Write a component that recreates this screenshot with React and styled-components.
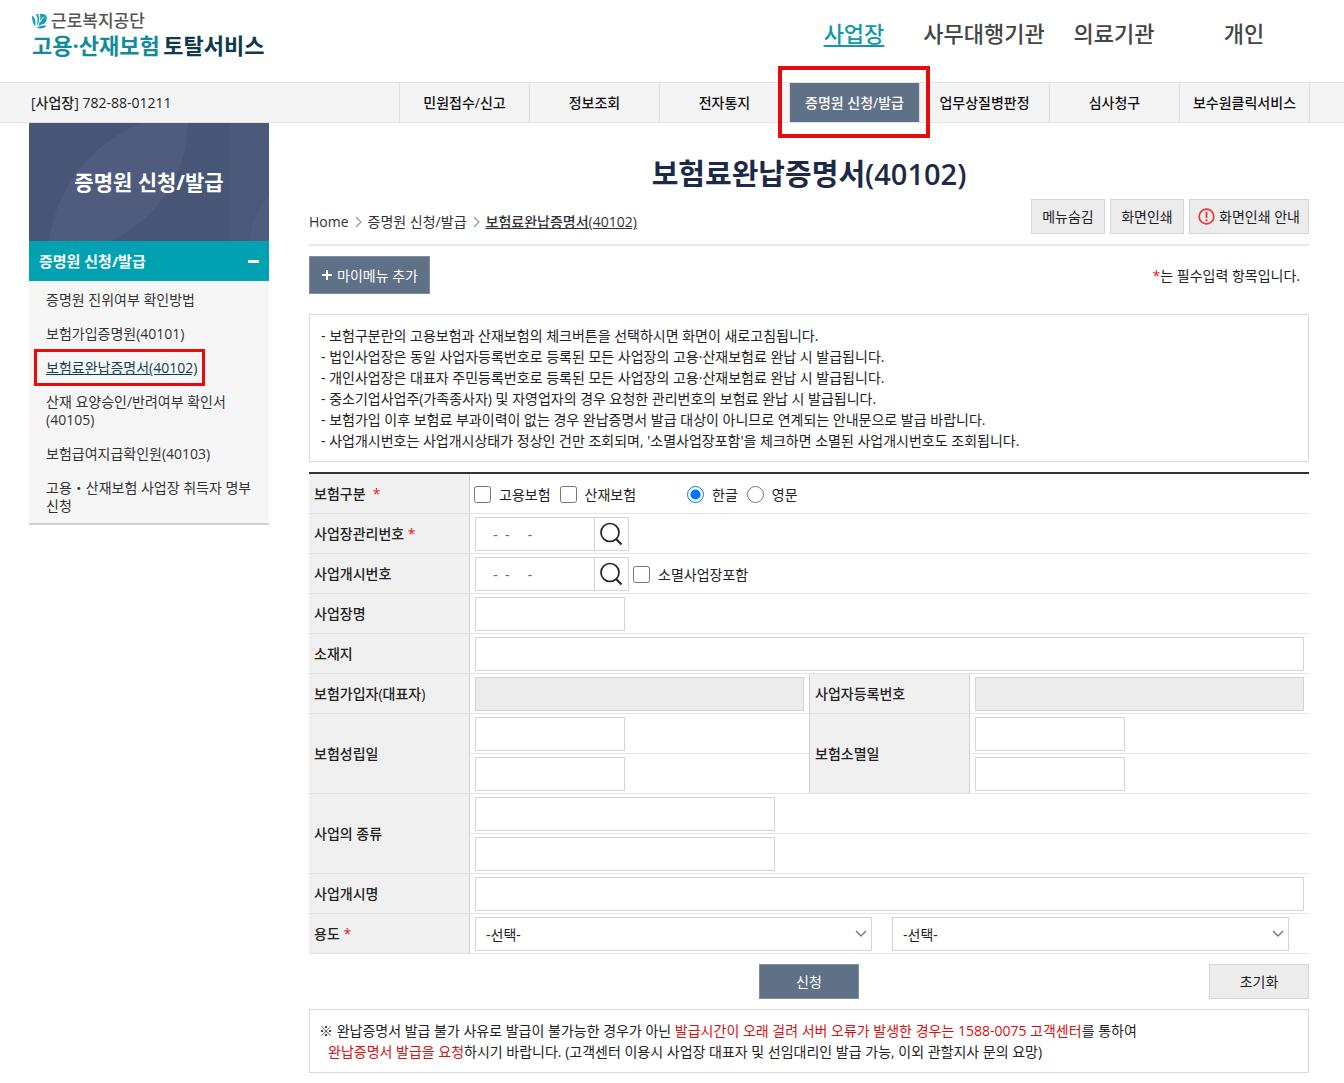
import React from "react";
import styled, { createGlobalStyle, css } from "styled-components";

const GlobalStyle = createGlobalStyle`
  * {
    box-sizing: border-box;
  }
  body {
    margin: 0;
    background: #fff;
    color: #222;
    font-family: "Open Sans", "Noto Sans CJK KR", sans-serif;
    font-size: 14px;
    line-height: 21px;
  }
  a {
    color: inherit;
    text-decoration: none;
  }
  ul, ol {
    margin: 0;
    padding: 0;
    list-style: none;
  }
  button, input, select {
    font: inherit;
    color: inherit;
  }
`;

const Container = styled.div`
  display: flex;
  padding: 0 35px 0 29px;
`;

const Header = styled(Container)`
  justify-content: space-between;
  height: 82px;
`;

const Logo = styled.a`
  display: block;
  padding: 11px 0 0 3px;
`;

const LogoTop = styled.span`
  display: flex;
  align-items: center;
  gap: 4px;
  color: #555;
  font-size: 17px;
  font-weight: 500;
  line-height: 20px;
`;

const LogoName = styled.span`
  display: inline-block;
  color: ${(props) => (props.$dark ? "#0f3a4a" : "#128c9c")};
  font-size: 22px;
  font-weight: 700;
  line-height: 28px;
`;

const TopMenu = styled.nav`
  display: flex;
`;

const TopLink = styled.a`
  width: 130px;
  padding-top: 17px;
  color: ${(props) => (props.$active ? "#1099a6" : "#444")};
  font-size: 22px;
  font-weight: 500;
  line-height: 33px;
  text-align: center;
  text-decoration: ${(props) => (props.$active ? "underline" : "none")};
  text-decoration-thickness: 2px;
  text-underline-offset: 3px;
`;

const SubBar = styled.div`
  background: #f4f4f4;
  border-top: 1px solid #e3e3e3;
  border-bottom: 1px solid #e3e3e3;
`;

const SubInner = styled(Container)`
  justify-content: space-between;
  padding-right: 34px;
`;

const Workplace = styled.div`
  padding-left: 2px;
  font-weight: 500;
  line-height: 39px;
`;

const SubMenu = styled.nav`
  display: flex;
  border-left: 1px solid #ddd;
`;

const SubLink = styled.a`
  position: relative;
  width: 130px;
  border-right: 1px solid #ddd;
  background: ${(props) => (props.$active ? "#5f7186" : "transparent")};
  color: ${(props) => (props.$active ? "#fff" : "#111")};
  font-weight: 500;
  line-height: 39px;
  text-align: center;
  white-space: nowrap;
`;

const Marker = styled.span`
  position: absolute;
  z-index: 1;
  pointer-events: none;
  border: ${(props) => (props.$small ? "3px" : "4px")} solid #e60c0c;
  inset: ${(props) => (props.$small ? "-2px 64px -1px 5px" : "-17px -11px -16px -12px")};
`;

const Body = styled(Container)`
  align-items: flex-start;
  gap: 40px;
`;

const Side = styled.aside`
  flex: 0 0 240px;
`;

const Hero = styled.div`
  position: relative;
  display: flex;
  align-items: center;
  justify-content: center;
  height: 118px;
  background: #475577;
  color: #fff;
`;

const HeroArt = styled.svg`
  position: absolute;
  inset: 0;
  width: 100%;
  height: 100%;
`;

const HeroTitle = styled.h2`
  position: relative;
  margin: 0;
  font-size: 21px;
  font-weight: 700;
  line-height: 30px;
`;

const SideHead = styled.button`
  display: flex;
  align-items: center;
  justify-content: space-between;
  width: 100%;
  height: 40px;
  padding: 0 10px;
  border: 0;
  background: #00a2b1;
  color: #fff;
  font-size: 15px;
  font-weight: 700;
`;

const Minus = styled.span`
  width: 11px;
  height: 3px;
  background: #fff;
`;

const SideList = styled.ul`
  padding-top: 2px;
  border-bottom: 2px solid #d0d0d0;
  background: #f6f6f6;
`;

const SideItem = styled.li`
  position: relative;
  padding: 8px 12px 8px 17px;
  color: #333;
  line-height: 18px;
`;

const SideLink = styled.a`
  color: ${(props) => (props.$active ? "#12404f" : "inherit")};
  text-decoration: ${(props) => (props.$active ? "underline" : "none")};
`;

const Main = styled.main`
  flex: 1;
  min-width: 0;
`;

const Title = styled.h1`
  margin: 0;
  padding-top: 30px;
  color: #1d2a47;
  font-size: 29px;
  font-weight: 600;
  line-height: 42px;
  text-align: center;
`;

const PageTools = styled.div`
  display: flex;
  align-items: flex-end;
  justify-content: space-between;
  height: 51px;
  padding-bottom: 10px;
  border-bottom: 2px solid #e8e8e8;
`;

const Crumbs = styled.nav`
  display: flex;
  align-items: center;
  gap: 6px;
  padding-bottom: 2px;
  color: #333;
`;

const Current = styled.a`
  font-weight: 500;
  text-decoration: underline;
`;

const ButtonGroup = styled.div`
  display: flex;
  gap: 5px;
`;

const Button = styled.button`
  display: inline-flex;
  align-items: center;
  justify-content: center;
  gap: 4px;
  min-width: ${(props) => props.$width || "74px"};
  height: ${(props) => props.$height || "35px"};
  padding: 0 ${(props) => props.$pad || "10px"};
  border: 1px solid #d6d6d6;
  background: #ececec;
  white-space: nowrap;

  ${(props) =>
    props.$primary &&
    css`
      border-color: #7f8d9d;
      background: #5f7186;
      color: #fff;
    `}
`;

const Row = styled.div`
  display: flex;
  align-items: center;
  justify-content: space-between;
  padding: 10px 9px 20px 0;
`;

const Star = styled.span`
  color: #e21b1b;
`;

const Box = styled.section`
  padding: 10px ${(props) => props.$pad};
  border: 1px solid #d9d9d9;
`;

const Red = styled.span`
  color: #d80f0f;
`;

const Indent = styled.div`
  padding-left: 9px;
`;

const Table = styled.table`
  width: 100%;
  margin-top: 10px;
  border-spacing: 0;
  border-top: 2px solid #333;
  table-layout: fixed;
`;

const LabelCol = styled.col`
  width: 161px;
`;

const Th = styled.th`
  height: 40px;
  padding: 0 5px;
  border-right: 1px solid #d2d2d2;
  border-bottom: 1px solid #e0e0e0;
  border-left: ${(props) => (props.$inner ? "1px solid #d2d2d2" : "0")};
  background: #f0f0f0;
  font-weight: 500;
  text-align: left;
`;

const Td = styled.td`
  height: 40px;
  padding: 3px 5px 2px;
  border-bottom: 1px solid #e3e3e3;
`;

const Line = styled.div`
  display: flex;
  align-items: center;
`;

const Field = styled.input`
  display: block;
  width: ${(props) => props.$width || "100%"};
  height: 34px;
  padding: 0 10px;
  border: 1px solid #d4d4d4;
  border-radius: 0;
  background: #fff;
  color: #666;
  outline: 0;

  &:disabled {
    background: #ececec;
  }
`;

const SearchButton = styled.button`
  display: flex;
  align-items: center;
  justify-content: center;
  width: 35px;
  height: 34px;
  margin-left: -1px;
  padding: 0 2px 0 0;
  border: 1px solid #d4d4d4;
  background: #fff;
`;

const Choice = styled.label`
  display: inline-flex;
  align-items: center;
  gap: 8px;
  margin-right: 9px;
  margin-left: ${(props) => props.$before || "0"};

  input {
    width: 17px;
    height: 17px;
    margin: 0;
  }
`;

const Options = styled(Line)`
  margin-left: -1px;
`;

const Selects = styled.div`
  display: flex;
  gap: 20px;
  padding-right: 15px;
`;

const SelectWrap = styled.div`
  position: relative;
  flex: 1;

  svg {
    position: absolute;
    top: 13px;
    right: 5px;
    pointer-events: none;
  }
`;

const Select = styled.select`
  display: block;
  width: 100%;
  height: 34px;
  padding: 0 10px;
  border: 1px solid #d4d4d4;
  border-radius: 0;
  background: #fff;
  appearance: none;
`;

const Actions = styled.div`
  display: grid;
  grid-template-columns: 1fr auto 1fr;
  padding: 10px 0;

  button:first-child {
    grid-column: 2;
  }
  button:last-child {
    justify-self: end;
  }
`;

const topMenu = ["사업장", "사무대행기관", "의료기관", "개인"];

const subMenu = [
  "민원접수/신고",
  "정보조회",
  "전자통지",
  "증명원 신청/발급",
  "업무상질병판정",
  "심사청구",
  "보수원클릭서비스",
];

const sideMenu = [
  "증명원 진위여부 확인방법",
  "보험가입증명원(40101)",
  "보험료완납증명서(40102)",
  "산재 요양승인/반려여부 확인서(40105)",
  "보험급여지급확인원(40103)",
  "고용・산재보험 사업장 취득자 명부 신청",
];

const notices = [
  "보험구분란의 고용보험과 산재보험의 체크버튼을 선택하시면 화면이 새로고침됩니다.",
  "법인사업장은 동일 사업자등록번호로 등록된 모든 사업장의 고용·산재보험료 완납 시 발급됩니다.",
  "개인사업장은 대표자 주민등록번호로 등록된 모든 사업장의 고용·산재보험료 완납 시 발급됩니다.",
  "중소기업사업주(가족종사자) 및 자영업자의 경우 요청한 관리번호의 보험료 완납 시 발급됩니다.",
  "보험가입 이후 보험료 부과이력이 없는 경우 완납증명서 발급 대상이 아니므로 연계되는 안내문으로 발급 바랍니다.",
  "사업개시번호는 사업개시상태가 정상인 건만 조회되며, '소멸사업장포함'을 체크하면 소멸된 사업개시번호도 조회됩니다.",
];

function LogoMark() {
  return (
    <svg width="15" height="16" viewBox="0 0 15 16" aria-hidden="true">
      <path d="M0 2.500c2.800 1.500 4 5 3.200 10.500C1 11.500 0 8 0 2.500z" fill="#1a9fae" />
      <path d="M3.500 1c2.500 2.500 2.800 7 .8 12 3-2.500 3.800-8 1.700-12z" fill="#1a9fae" />
      <path
        d="M8 1h3c2.500 0 3.800 2 3.800 4.500 0 3.500-2.300 5.700-5 6L6 13c2-3.500 2.800-7.500 2-12z"
        fill="#1a9fae"
      />
      <path d="M8.500 9c.5-2.500 1.500-4.300 3.700-4.500" stroke="#fff" fill="none" />
      <path d="M4.500 15c2-2 5.500-2.500 10-2.500-1 2.500-5 3.500-10 2.500z" fill="#1a9fae" />
    </svg>
  );
}

function Arrow() {
  return (
    <svg width="7" height="12" viewBox="0 0 7 12" aria-hidden="true">
      <path d="M1 1l5 5-5 5" fill="none" stroke="#999" strokeWidth="1.2" />
    </svg>
  );
}

function Chevron() {
  return (
    <svg width="12" height="8" viewBox="0 0 12 8" aria-hidden="true">
      <path d="M1 1l5 5 5-5" fill="none" stroke="#777" strokeWidth="1.4" />
    </svg>
  );
}

function AlertIcon() {
  return (
    <svg width="17" height="17" viewBox="0 0 18 18" aria-hidden="true">
      <circle cx="9" cy="9" r="7.800" fill="none" stroke="#e23b3b" strokeWidth="1.8" />
      <path d="M9 4v6.500" stroke="#e23b3b" strokeWidth="2" />
      <path d="M9 12v2" stroke="#e23b3b" strokeWidth="2" />
    </svg>
  );
}

function Search({ label }) {
  return (
    <SearchButton type="button" aria-label={label}>
      <svg width="22" height="24" viewBox="0 0 22 24" aria-hidden="true">
        <circle cx="10" cy="10.500" r="9" fill="none" stroke="#222" strokeWidth="1.7" />
        <path d="M16 17l5.500 5.500" stroke="#222" strokeWidth="2" />
      </svg>
    </SearchButton>
  );
}

function Purpose({ label, id }) {
  return (
    <SelectWrap>
      <Select id={id} aria-label={label}>
        <option>-선택-</option>
      </Select>
      <Chevron />
    </SelectWrap>
  );
}

function Sidebar() {
  return (
    <Side>
      <Hero>
        <HeroArt viewBox="0 0 240 118" preserveAspectRatio="none" aria-hidden="true">
          <path d="M20 118C26 70 58 22 112 0h47c-2 50-26 92-76 118z" fill="#505c7e" />
          <path d="M201 0h39v72c-11 12-18 28-20 46h-19z" fill="#4a587a" />
          <path d="M220 118c2-18 9-34 20-46v46z" fill="#505c7e" />
        </HeroArt>
        <HeroTitle>증명원 신청/발급</HeroTitle>
      </Hero>
      <SideHead type="button" aria-expanded="true">
        증명원 신청/발급
        <Minus />
      </SideHead>
      <SideList>
        {sideMenu.map((item, i) => (
          <SideItem key={item}>
            <SideLink href="#" $active={i === 2}>
              {item}
            </SideLink>
            {i === 2 && <Marker $small />}
          </SideItem>
        ))}
      </SideList>
    </Side>
  );
}

function CertificateForm() {
  return (
    <form onSubmit={(e) => e.preventDefault()}>
      <Table>
        <colgroup>
          <LabelCol />
          <col />
          <LabelCol />
          <col />
        </colgroup>
        <tbody>
          <tr>
            <Th scope="row">
              보험구분 &nbsp;<Star>*</Star>
            </Th>
            <Td colSpan={3}>
              <Options>
                <Choice>
                  <input type="checkbox" />
                  고용보험
                </Choice>
                <Choice>
                  <input type="checkbox" />
                  산재보험
                </Choice>
                <Choice $before="42px">
                  <input type="radio" name="lang" defaultChecked />
                  한글
                </Choice>
                <Choice>
                  <input type="radio" name="lang" />
                  영문
                </Choice>
              </Options>
            </Td>
          </tr>
          <tr>
            <Th scope="row">
              <label htmlFor="manageNo">사업장관리번호</label> <Star>*</Star>
            </Th>
            <Td colSpan={3}>
              <Line>
                <Field id="manageNo" $width="120px" defaultValue="  -  -     -" />
                <Search label="사업장관리번호 검색" />
              </Line>
            </Td>
          </tr>
          <tr>
            <Th scope="row">
              <label htmlFor="openNo">사업개시번호</label>
            </Th>
            <Td colSpan={3}>
              <Line>
                <Field id="openNo" $width="120px" defaultValue="  -  -     -" />
                <Search label="사업개시번호 검색" />
                <Choice $before="4px">
                  <input type="checkbox" />
                  소멸사업장포함
                </Choice>
              </Line>
            </Td>
          </tr>
          <tr>
            <Th scope="row">
              <label htmlFor="company">사업장명</label>
            </Th>
            <Td colSpan={3}>
              <Field id="company" $width="150px" />
            </Td>
          </tr>
          <tr>
            <Th scope="row">
              <label htmlFor="address">소재지</label>
            </Th>
            <Td colSpan={3}>
              <Field id="address" />
            </Td>
          </tr>
          <tr>
            <Th scope="row">
              <label htmlFor="owner">보험가입자(대표자)</label>
            </Th>
            <Td>
              <Field id="owner" disabled />
            </Td>
            <Th scope="row" $inner>
              <label htmlFor="bizNo">사업자등록번호</label>
            </Th>
            <Td>
              <Field id="bizNo" disabled />
            </Td>
          </tr>
          <tr>
            <Th scope="row" rowSpan={2}>
              <label htmlFor="start1">보험성립일</label>
            </Th>
            <Td>
              <Field id="start1" $width="150px" />
            </Td>
            <Th scope="row" rowSpan={2} $inner>
              <label htmlFor="end1">보험소멸일</label>
            </Th>
            <Td>
              <Field id="end1" $width="150px" />
            </Td>
          </tr>
          <tr>
            <Td>
              <Field aria-label="보험성립일" $width="150px" />
            </Td>
            <Td>
              <Field aria-label="보험소멸일" $width="150px" />
            </Td>
          </tr>
          <tr>
            <Th scope="row" rowSpan={2}>
              <label htmlFor="kind1">사업의 종류</label>
            </Th>
            <Td colSpan={3}>
              <Field id="kind1" $width="300px" />
            </Td>
          </tr>
          <tr>
            <Td colSpan={3}>
              <Field aria-label="사업의 종류" $width="300px" />
            </Td>
          </tr>
          <tr>
            <Th scope="row">
              <label htmlFor="openName">사업개시명</label>
            </Th>
            <Td colSpan={3}>
              <Field id="openName" />
            </Td>
          </tr>
          <tr>
            <Th scope="row">
              <label htmlFor="purpose">용도</label> <Star>*</Star>
            </Th>
            <Td colSpan={3}>
              <Selects>
                <Purpose id="purpose" />
                <Purpose label="용도" />
              </Selects>
            </Td>
          </tr>
        </tbody>
      </Table>
      <Actions>
        <Button type="submit" $primary $width="100px">
          신청
        </Button>
        <Button type="reset" $width="100px">
          초기화
        </Button>
      </Actions>
    </form>
  );
}

function App() {
  return (
    <>
      <GlobalStyle />
      <Header as="header">
        <Logo href="#">
          <LogoTop>
            <LogoMark />
            근로복지공단
          </LogoTop>
          <LogoName>고용·산재보험</LogoName> <LogoName $dark>토탈서비스</LogoName>
        </Logo>
        <TopMenu>
          {topMenu.map((item, i) => (
            <TopLink key={item} href="#" $active={i === 0}>
              {item}
            </TopLink>
          ))}
        </TopMenu>
      </Header>
      <SubBar>
        <SubInner>
          <Workplace>[사업장] 782-88-01211</Workplace>
          <SubMenu>
            {subMenu.map((item, i) => (
              <SubLink key={item} href="#" $active={i === 3}>
                {item}
                {i === 3 && <Marker />}
              </SubLink>
            ))}
          </SubMenu>
        </SubInner>
      </SubBar>
      <Body>
        <Sidebar />
        <Main>
          <Title>보험료완납증명서(40102)</Title>
          <PageTools>
            <Crumbs>
              <a href="#">Home</a>
              <Arrow />
              <a href="#">증명원 신청/발급</a>
              <Arrow />
              <Current href="#">보험료완납증명서(40102)</Current>
            </Crumbs>
            <ButtonGroup>
              <Button type="button">메뉴숨김</Button>
              <Button type="button">화면인쇄</Button>
              <Button type="button" $pad="5px" $width="120px">
                <AlertIcon />
                화면인쇄 안내
              </Button>
            </ButtonGroup>
          </PageTools>
          <Row>
            <Button type="button" $primary $width="121px" $height="38px">
              <svg width="12" height="12" viewBox="0 0 12 12" aria-hidden="true">
                <path d="M6 1v10M1 6h10" stroke="#fff" strokeWidth="2" />
              </svg>
              마이메뉴 추가
            </Button>
            <span>
              <Star>*</Star>는 필수입력 항목입니다.
            </span>
          </Row>
          <Box $pad="11px">
            <ul>
              {notices.map((line) => (
                <li key={line}>- {line}</li>
              ))}
            </ul>
          </Box>
          <CertificateForm />
          <Box $pad="9px">
            <div>
              ※ 완납증명서 발급 불가 사유로 발급이 불가능한 경우가 아닌{" "}
              <Red>발급시간이 오래 걸려 서버 오류가 발생한 경우는 1588-0075 고객센터</Red>를 통하여
            </div>
            <Indent>
              <Red>완납증명서 발급을 요청</Red>하시기 바랍니다. (고객센터 이용시 사업장 대표자 및
              선임대리인 발급 가능, 이외 관할지사 문의 요망)
            </Indent>
          </Box>
        </Main>
      </Body>
    </>
  );
}

export default App;
